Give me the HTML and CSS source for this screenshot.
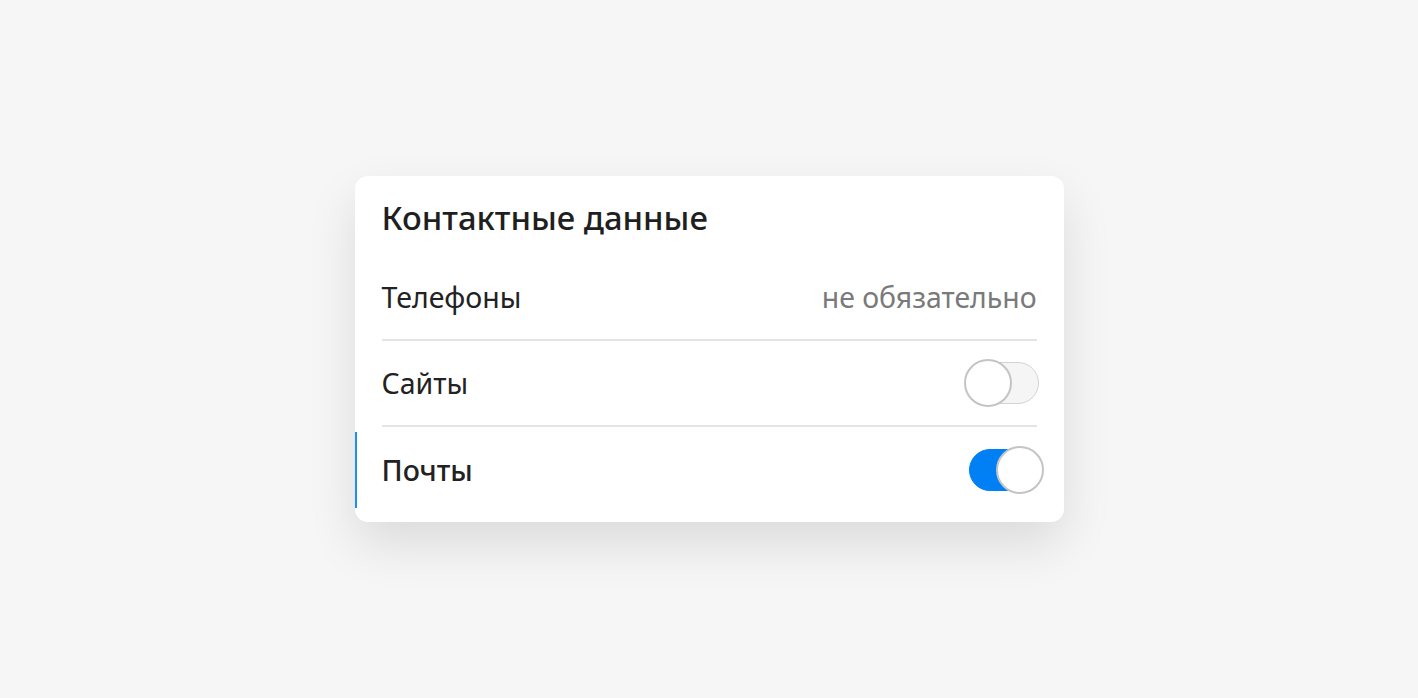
FILE: index.html
```html
<!DOCTYPE html>
<html lang="ru">
<head>
    <meta charset="UTF-8">
    <meta name="viewport" content="width=device-width, initial-scale=1.0">
    <title>Контактные данные</title>
    <link rel="stylesheet" href="styles.css">
</head>
<body>
    <div class="card">
        <h2 class="card-title">Контактные данные</h2>
        <div class="row">
            <span class="row-label">Телефоны</span>
            <span class="row-hint">не обязательно</span>
        </div>
        <div class="row">
            <span class="row-label">Сайты</span>
            <span class="switch"><span class="knob"></span></span>
        </div>
        <div class="row row-active">
            <span class="row-label row-label-bold">Почты</span>
            <span class="switch switch-on"><span class="knob"></span></span>
        </div>
    </div>
</body>
</html>
```

FILE: styles.css
```css
html, body {
    margin: 0;
    padding: 0;
}
body {
    font-family: "Noto Sans", Roboto, Arial, sans-serif;
    background-color: #f6f6f6;
    color: #222;
    min-height: 100vh;
    display: flex;
    align-items: center;
    justify-content: center;
}
.card {
    position: relative;
    width: 709px;
    box-sizing: border-box;
    padding: 23px 27px 9px;
    background-color: #fff;
    border-radius: 13px;
    box-shadow: 0 22px 50px rgba(0, 0, 0, 0.11);
}
.card-title {
    margin: 0 0 18px;
    font-size: 32.8px;
    line-height: 38px;
    font-weight: 500;
    color: #1f1f1f;
}
.row {
    height: 84px;
    display: flex;
    align-items: center;
    justify-content: space-between;
    border-bottom: 2px solid #e4e4e4;
}
.row:last-child {
    height: 86px;
    border-bottom: none;
}
.row-active::before {
    content: "";
    position: absolute;
    left: 0;
    bottom: 14px;
    width: 2px;
    height: 76px;
    background-color: #1e8cf5;
}
.row-label {
    font-size: 28.5px;
    color: #222;
}
.row-label-bold {
    font-weight: 500;
}
.row-hint {
    font-size: 28.4px;
    color: #7a7a7a;
}
.switch {
    position: relative;
    width: 72px;
    height: 40px;
    margin-right: -2px;
    border: 1px solid #d4d4d4;
    border-radius: 21px;
    background-color: #f5f5f5;
}
.knob {
    position: absolute;
    left: -2px;
    top: -4px;
    width: 44px;
    height: 44px;
    border: 2px solid #c4c4c4;
    border-radius: 50%;
    background-color: #fff;
}
.switch-on {
    width: 70px;
    margin-right: -4px;
    border-color: #0080f4;
    background-color: #0080f4;
}
.switch-on .knob {
    left: auto;
    right: -4px;
    top: -4px;
}
```
